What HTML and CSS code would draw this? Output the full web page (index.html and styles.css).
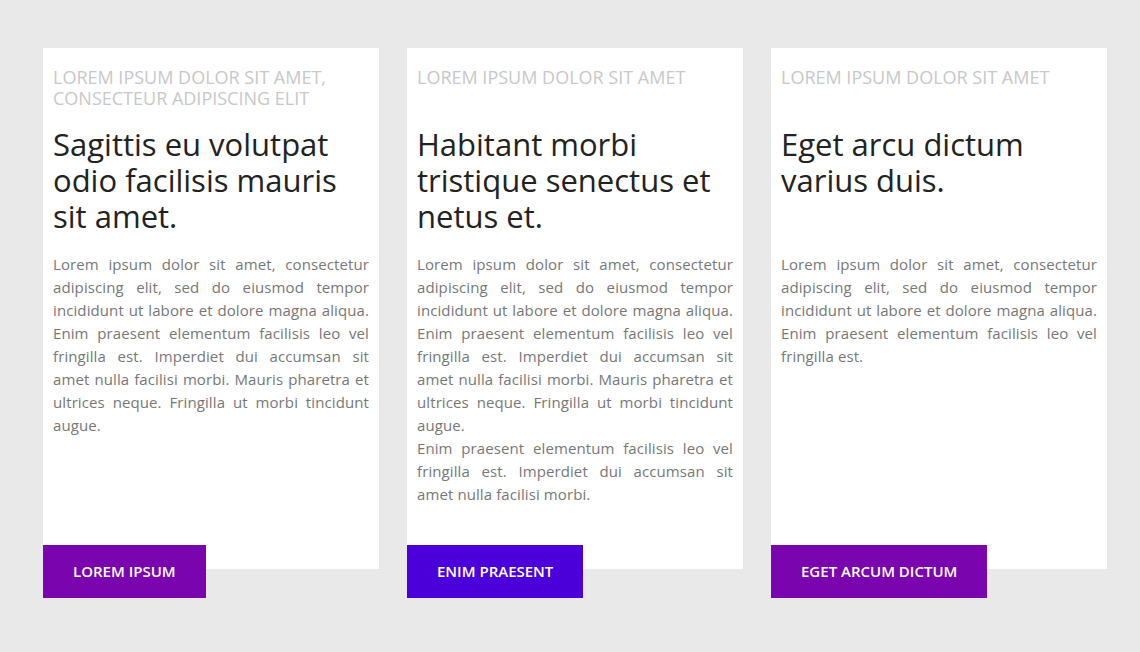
FILE: index.html
```html
<!DOCTYPE html>
<html lang="en">
<head>
<meta charset="utf-8">
<title>Cards</title>
<link rel="stylesheet" href="styles.css">
</head>
<body>
<main class="cards">
  <section class="col">
    <article class="card">
      <p class="eyebrow">Lorem ipsum dolor sit amet, consecteur adipiscing elit</p>
      <h2 class="title">Sagittis eu volutpat odio facilisis mauris sit amet.</h2>
      <p class="body">Lorem ipsum dolor sit amet, consectetur adipiscing elit, sed do eiusmod tempor incididunt ut labore et dolore magna aliqua. Enim praesent elementum facilisis leo vel fringilla est. Imperdiet dui accumsan sit amet nulla facilisi morbi. Mauris pharetra et ultrices neque. Fringilla ut morbi tincidunt augue.</p>
    </article>
    <a class="btn btn-purple" href="#">Lorem ipsum</a>
  </section>
  <section class="col">
    <article class="card">
      <p class="eyebrow">Lorem ipsum dolor sit amet</p>
      <h2 class="title">Habitant morbi tristique senectus et netus et.</h2>
      <p class="body">Lorem ipsum dolor sit amet, consectetur adipiscing elit, sed do eiusmod tempor incididunt ut labore et dolore magna aliqua. Enim praesent elementum facilisis leo vel fringilla est. Imperdiet dui accumsan sit amet nulla facilisi morbi. Mauris pharetra et ultrices neque. Fringilla ut morbi tincidunt augue.<br>Enim praesent elementum facilisis leo vel fringilla est. Imperdiet dui accumsan sit amet nulla facilisi morbi.</p>
    </article>
    <a class="btn btn-violet" href="#">Enim praesent</a>
  </section>
  <section class="col">
    <article class="card">
      <p class="eyebrow">Lorem ipsum dolor sit amet</p>
      <h2 class="title">Eget arcu dictum varius duis.</h2>
      <p class="body">Lorem ipsum dolor sit amet, consectetur adipiscing elit, sed do eiusmod tempor incididunt ut labore et dolore magna aliqua. Enim praesent elementum facilisis leo vel fringilla est.</p>
    </article>
    <a class="btn btn-purple" href="#">Eget arcum dictum</a>
  </section>
</main>
</body>
</html>
```
FILE: styles.css
```css
* { box-sizing: border-box; }
html, body {
  margin: 0;
  background: #e9e9e9;
  font-family: "Open Sans", "Noto Sans", sans-serif;
}
.cards {
  display: grid;
  grid-template-columns: repeat(3, 336px);
  column-gap: 28px;
  padding: 48px 0 0 43px;
}
.col {
  display: flex;
  flex-direction: column;
}
.card {
  flex: 1;
  background: #fff;
  padding: 19px 10px 63px;
}
.eyebrow {
  margin: 0;
  min-height: 42px;
  font-size: 18px;
  line-height: 21px;
  color: #c8c8c8;
  text-transform: uppercase;
}
.title {
  margin: 17px 0 0;
  min-height: 108px;
  font-size: 31px;
  line-height: 36px;
  font-weight: 400;
  color: #222;
}
.body {
  margin: 19px 0 0;
  font-size: 15px;
  line-height: 23px;
  letter-spacing: 0.1px;
  color: #777;
  text-align: justify;
}
.btn {
  align-self: flex-start;
  position: relative;
  margin-top: -24px;
  height: 53px;
  padding: 0 30px 2px;
  display: flex;
  align-items: center;
  font-size: 15px;
  font-weight: 600;
  color: #fff;
  text-decoration: none;
  text-transform: uppercase;
}
.btn-purple { background: #7a05ae; }
.btn-violet { background: #4b00d9; }
```
